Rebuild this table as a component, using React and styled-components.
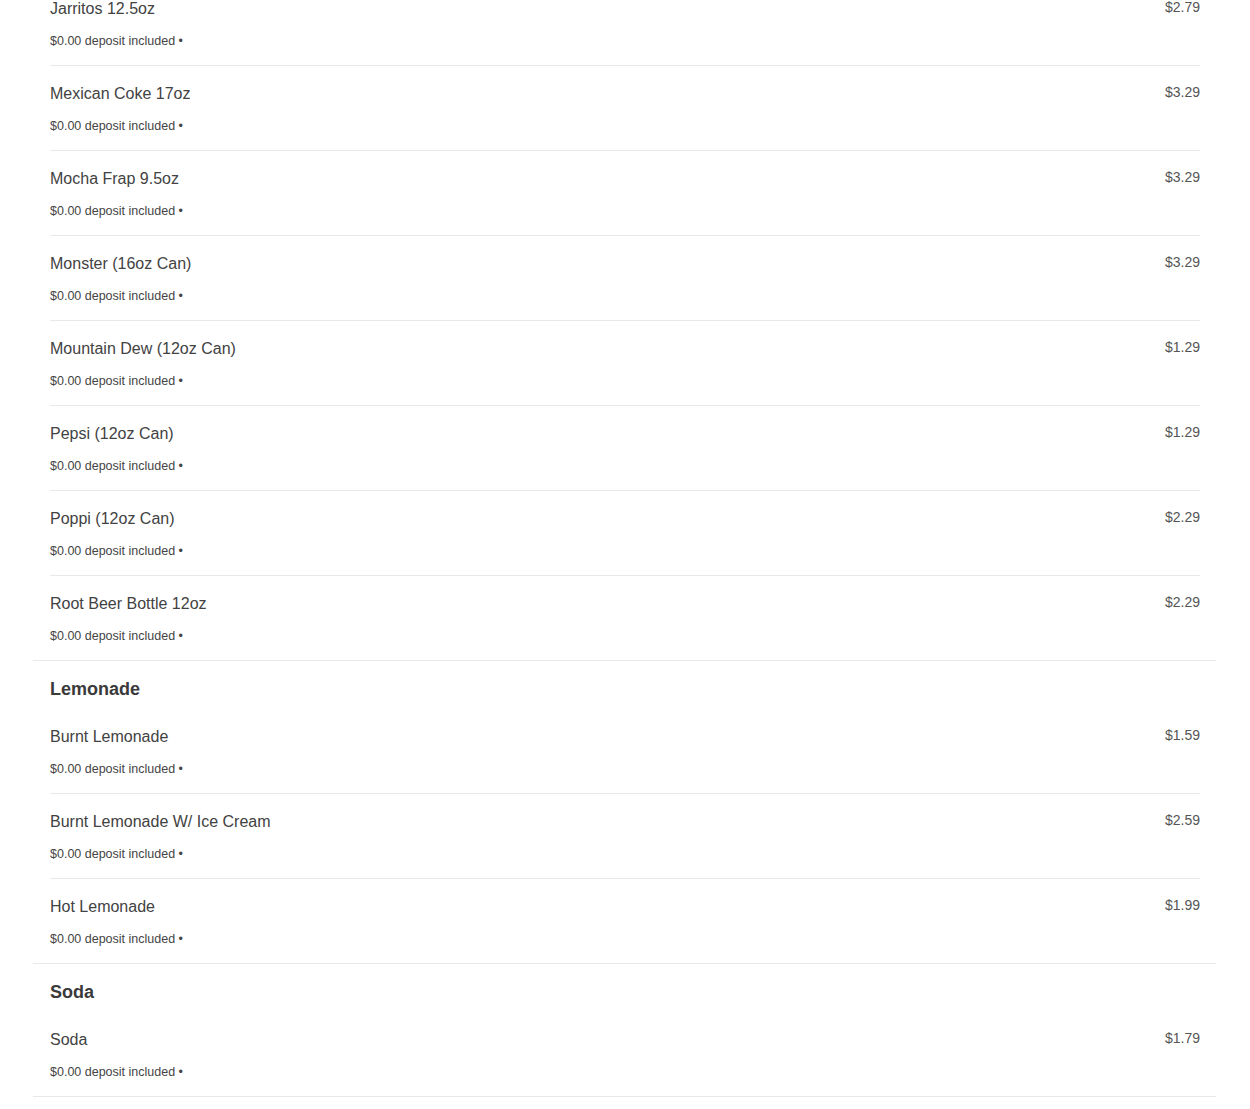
import React from 'react';
import styled, { createGlobalStyle } from 'styled-components';

const GlobalStyle = createGlobalStyle`
  body {
    margin: 0;
    background: #ffffff;
    font-family: "Liberation Sans", Arial, sans-serif;
  }
`;

const menu = [
  {
    nombre: null,
    items: [
      { nombre: 'Jarritos 12.5oz', precio: '$2.79' },
      { nombre: 'Mexican Coke 17oz', precio: '$3.29' },
      { nombre: 'Mocha Frap 9.5oz', precio: '$3.29' },
      { nombre: 'Monster (16oz Can)', precio: '$3.29' },
      { nombre: 'Mountain Dew (12oz Can)', precio: '$1.29' },
      { nombre: 'Pepsi (12oz Can)', precio: '$1.29' },
      { nombre: 'Poppi (12oz Can)', precio: '$2.29' },
      { nombre: 'Root Beer Bottle 12oz', precio: '$2.29' },
    ],
  },
  {
    nombre: 'Lemonade',
    items: [
      { nombre: 'Burnt Lemonade', precio: '$1.59' },
      { nombre: 'Burnt Lemonade W/ Ice Cream', precio: '$2.59' },
      { nombre: 'Hot Lemonade', precio: '$1.99' },
    ],
  },
  {
    nombre: 'Soda',
    items: [{ nombre: 'Soda', precio: '$1.79' }],
  },
];

const App = () => {
  return (
    <>
      <GlobalStyle />
      <Pagina>
        {menu.map((seccion, i) => (
          <Seccion key={i}>
            {seccion.nombre && <Titulo>{seccion.nombre}</Titulo>}
            {seccion.items.map((item, j) => (
              <Item key={item.nombre} $ultimo={j === seccion.items.length - 1}>
                <Info>
                  <Nombre>{item.nombre}</Nombre>
                  <Deposito>$0.00 deposit included •</Deposito>
                </Info>
                <Precio>{item.precio}</Precio>
              </Item>
            ))}
          </Seccion>
        ))}
      </Pagina>
    </>
  );
};

export default App;

const Pagina = styled.main`
  margin: -19px 34px 0 33px;
`;

const Seccion = styled.section`
  border-bottom: 1px solid #e8e8e8;
`;

const Titulo = styled.h2`
  margin: 0;
  padding: 17px 16px 9px 17px;
  font-size: 18px;
  line-height: 22px;
  font-weight: 700;
  color: #3a3a3a;
`;

const Item = styled.div`
  display: flex;
  justify-content: space-between;
  align-items: flex-start;
  margin: 0 16px 0 17px;
  padding: 18px 0 16px 0;
  border-bottom: ${({ $ultimo }) => ($ultimo ? '0' : '1px solid #e8e8e8')};
`;

const Info = styled.div`
  display: flex;
  flex-direction: column;
  gap: 14px;
`;

const Nombre = styled.span`
  font-size: 16px;
  line-height: 20px;
  color: #424242;
`;

const Deposito = styled.span`
  font-size: 12.5px;
  line-height: 16px;
  color: #444444;
`;

const Precio = styled.span`
  font-size: 14px;
  line-height: 16px;
  color: #555555;
`;
